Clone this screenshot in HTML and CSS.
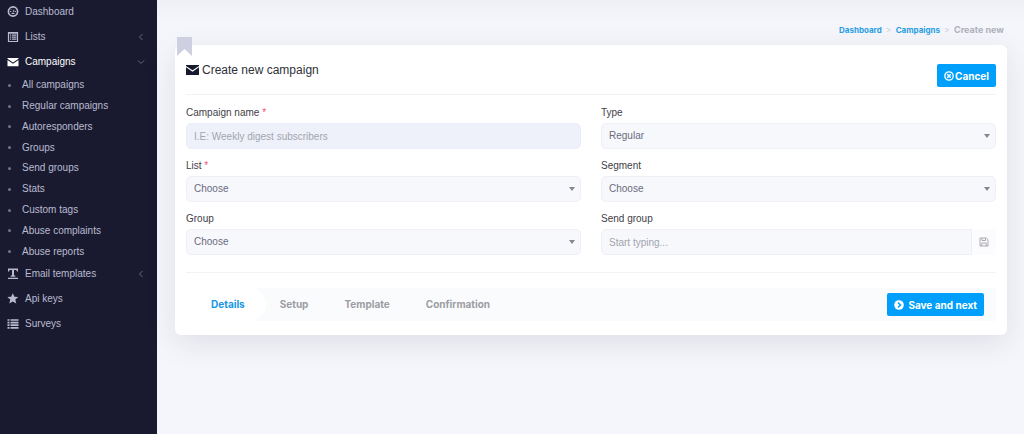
FILE: index.html
```html
<!DOCTYPE html>
<html lang="en">
<head>
<meta charset="utf-8">
<meta name="viewport" content="width=device-width, initial-scale=1">
<title>Create new campaign</title>
<link rel="stylesheet" href="styles.css">
</head>
<body>
<div class="app">
  <nav class="sidebar" aria-label="Main">
    <ul class="menu">
      <li><a class="menu-link" href="#">
        <svg class="icon" viewBox="0 0 12 12"><circle cx="6" cy="5.500" r="4.600" fill="none" stroke="currentColor" stroke-width="1.600"/><path d="M6 6.500 7 3.800M3 5.500h1.200M7.800 5.500H9M4 3.300l.7.700M4.500 7.500h3" stroke="currentColor"/></svg>
        <span>Dashboard</span></a></li>
      <li><a class="menu-link" href="#">
        <svg class="icon" viewBox="0 0 12 12"><path d="M1.500 1.500h9v9h-9z" fill="none" stroke="currentColor" stroke-width="1.200"/><path d="M1.500 2h9M3 4.200h1.200M5 4.200h4.500M3 6.200h1.200M5 6.200h4.500M3 8.200h1.200M5 8.200h4.500" stroke="currentColor" stroke-width="1.300"/></svg>
        <span>Lists</span>
        <svg class="chevron" viewBox="0 0 8 8"><path d="M5.500 1 2.500 4l3 3" fill="none" stroke="currentColor" stroke-width=".9"/></svg></a></li>
      <li><a class="menu-link active" href="#">
        <svg class="icon" viewBox="0 0 12 12"><path d="M.5 2h11v.8L6 6.500.5 2.800z" fill="currentColor"/><path d="M.5 4 6 7.800 11.500 4v6.200H.5z" fill="currentColor"/></svg>
        <span>Campaigns</span>
        <svg class="chevron" viewBox="0 0 8 8"><path d="M1 2.500l3 3 3-3" fill="none" stroke="currentColor" stroke-width=".9"/></svg></a>
        <ul class="submenu">
          <li><a href="#">All campaigns</a></li>
          <li><a href="#">Regular campaigns</a></li>
          <li><a href="#">Autoresponders</a></li>
          <li><a href="#">Groups</a></li>
          <li><a href="#">Send groups</a></li>
          <li><a href="#">Stats</a></li>
          <li><a href="#">Custom tags</a></li>
          <li><a href="#">Abuse complaints</a></li>
          <li><a href="#">Abuse reports</a></li>
        </ul></li>
      <li><a class="menu-link" href="#">
        <svg class="icon" viewBox="0 0 12 12"><path d="M1 .5h10v3H9.900L9.400 2H7v5.600h1.300v1.100H3.700V7.600H5V2H2.600L2.100 3.500H1zM1 9.800h10v1.300H1z" fill="currentColor"/></svg>
        <span>Email templates</span>
        <svg class="chevron" viewBox="0 0 8 8"><path d="M5.500 1 2.500 4l3 3" fill="none" stroke="currentColor" stroke-width=".9"/></svg></a></li>
      <li><a class="menu-link" href="#">
        <svg class="icon" viewBox="0 0 12 12"><path d="M5.800.3 7.400 3.800l3.900.3-3 2.500 1 3.800-3.500-2-3.500 2 1-3.800-3-2.500 3.900-.3z" fill="currentColor"/></svg>
        <span>Api keys</span></a></li>
      <li><a class="menu-link" href="#">
        <svg class="icon" viewBox="0 0 12 12"><path d="M.5 2h2M3.500 2h8M.5 4.600h2M3.500 4.600h8M.5 7.200h2M3.500 7.200h8M.5 9.800h2M3.500 9.800h8" stroke="currentColor" stroke-width="1.700"/></svg>
        <span>Surveys</span></a></li>
    </ul>
  </nav>

  <main class="content">
    <nav class="breadcrumb" aria-label="Breadcrumb">
      <a href="#">Dashboard</a><span class="sep">&gt;</span><a href="#">Campaigns</a><span class="sep">&gt;</span><span class="current">Create new</span>
    </nav>

    <form class="card">
      <svg class="ribbon" viewBox="0 0 15 19"><path d="M0 0h15v19l-7.500-7L0 19z" fill="currentColor"/></svg>
      <header class="card-head">
        <h1 class="title">
          <svg class="title-icon" viewBox="0 0 13 12"><path d="M0 1h13v1L6.500 6.300 0 2z" fill="currentColor"/><path d="M0 3.200 6.500 7.700 13 3.200V11H0z" fill="currentColor"/></svg>
          Create new campaign</h1>
        <button class="btn btn-cancel" type="button">
          <svg class="btn-icon" viewBox="0 0 10 10"><circle cx="5" cy="5" r="4.200" fill="none" stroke="currentColor" stroke-width="1.300"/><path d="M3.300 3.300l3.400 3.400M6.700 3.300 3.300 6.700" stroke="currentColor" stroke-width="1.500"/></svg>Cancel</button>
      </header>

      <div class="fields">
        <div class="field">
          <label for="name">Campaign name <span class="required">*</span></label>
          <input class="control focused" id="name" type="text" placeholder="I.E: Weekly digest subscribers">
        </div>
        <div class="field">
          <label for="type">Type</label>
          <div class="select"><select class="control" id="type"><option>Regular</option></select></div>
        </div>
        <div class="field">
          <label for="list">List <span class="required">*</span></label>
          <div class="select"><select class="control" id="list"><option>Choose</option></select></div>
        </div>
        <div class="field">
          <label for="segment">Segment</label>
          <div class="select"><select class="control" id="segment"><option>Choose</option></select></div>
        </div>
        <div class="field">
          <label for="group">Group</label>
          <div class="select"><select class="control" id="group"><option>Choose</option></select></div>
        </div>
        <div class="field">
          <label for="send-group">Send group</label>
          <div class="input-group">
            <input class="control" id="send-group" type="text" placeholder="Start typing...">
            <button class="addon" type="button" aria-label="Save send group">
              <svg class="save-icon" viewBox="0 0 10 10"><path d="M1 1h6.300L9 2.700V9H1z" fill="none" stroke="currentColor" stroke-linejoin="round"/><path d="M3 1v2.500h3.500V1M2.800 9V6h4.400v3" fill="none" stroke="currentColor"/></svg>
            </button>
          </div>
        </div>
      </div>

      <footer class="wizard">
        <ol class="steps">
          <li><a class="step current-step" href="#">Details</a></li>
          <li><a class="step" href="#">Setup</a></li>
          <li><a class="step" href="#">Template</a></li>
          <li><a class="step" href="#">Confirmation</a></li>
        </ol>
        <button class="btn btn-next" type="submit">
          <svg class="btn-icon" viewBox="0 0 10 10"><circle cx="5" cy="5" r="4.800" fill="currentColor"/><path d="M4 2.500 6.500 5 4 7.500" fill="none" stroke="#009ffb" stroke-width="1.500"/></svg>Save and next</button>
      </footer>
    </form>
  </main>
</div>
</body>
</html>
```
FILE: styles.css
```css
* { box-sizing: border-box; }

body {
  margin: 0;
  background: #f4f6fb;
  color: #3f4047;
  font: 10px/16px "Liberation Sans", Arial, sans-serif;
}

a { text-decoration: none; color: inherit; }
ul, ol { margin: 0; padding: 0; list-style: none; }
button, input, select { font: inherit; }

.app { display: flex; min-height: 100vh; }

.sidebar {
  flex: 0 0 157px;
  background: #191a2f;
  color: #b9bad2;
}

.menu-link {
  display: flex;
  align-items: center;
  gap: 6px;
  height: 25px;
  padding: 0 12px 1px 7px;
}
.menu-link.active { color: #fff; }
.icon { width: 12px; height: 12px; }
.chevron { width: 8px; height: 8px; margin-left: auto; color: #6d6e8b; }

.submenu {
  display: grid;
  grid-auto-rows: 1fr;
  height: 187px;
}
.submenu a {
  display: flex;
  align-items: center;
  gap: 11px;
  height: 100%;
  padding-left: 8px;
}
.submenu a::before {
  content: "";
  width: 3px;
  height: 3px;
  border-radius: 50%;
  background: #73748f;
}

.content {
  flex: 1;
  min-width: 0;
  padding: 22px 17px 22px 18px;
  background: linear-gradient(#eef0f5, #f4f6fb 20px);
}

.breadcrumb {
  display: flex;
  justify-content: flex-end;
  padding-right: 3px;
  margin-bottom: 7px;
  color: #2a9fe4;
  font: 700 8px/16px Inter, sans-serif;
}
.sep { width: 14px; text-align: center; color: #c9cad3; font-weight: 400; }
.current { color: #b1b2bb; font-size: 9px; }

.card {
  position: relative;
  padding: 15px 11px 14px;
  border-radius: 6px;
  background: #fff;
  box-shadow: 0 8px 30px rgba(30, 32, 50, 0.1);
}

.ribbon {
  position: absolute;
  top: -8px;
  left: 2px;
  width: 15px;
  height: 19px;
  color: #cfcfe2;
}

.card-head {
  display: flex;
  justify-content: space-between;
  align-items: flex-start;
  height: 35px;
  border-bottom: 1px solid #f2f3f7;
}
.title {
  display: flex;
  align-items: center;
  gap: 3px;
  margin: 0;
  color: #2e3038;
  font-size: 12px;
  font-weight: 400;
  line-height: 20px;
}
.title-icon { width: 13px; height: 12px; color: #171a2c; }

.btn {
  display: flex;
  align-items: center;
  justify-content: center;
  height: 23px;
  padding: 0 7px;
  border: 0;
  border-radius: 2px;
  background: #009ffb;
  color: #fff;
  font: 700 10px/16px Inter, sans-serif;
}
.btn-icon { width: 10px; height: 10px; }
.btn-cancel { gap: 1px; margin-top: 4px; }
.btn-next { gap: 4px; }

.fields {
  display: grid;
  grid-template-columns: 1fr 1fr;
  gap: 9px 20px;
  padding: 10px 0 17px;
  border-bottom: 1px solid #f2f3f7;
}
.field label { display: block; margin-bottom: 2px; }
.required { color: #f4516c; }

.control {
  display: block;
  width: 100%;
  height: 26px;
  padding: 0 7px;
  border: 1px solid #eff0f5;
  border-radius: 5px;
  background: #f7f8fb;
  color: #6a6b80;
  appearance: none;
  outline: 0;
}
.control::placeholder { color: #a2a5b0; opacity: 1; }
.focused { border-color: #e9edf6; background: #eef1f9; }

.select { position: relative; }
.select::after {
  content: "";
  position: absolute;
  top: 11px;
  right: 6px;
  border: 3px solid transparent;
  border-top: 4px solid #84858f;
  border-bottom: 0;
}

.input-group { display: flex; }
.input-group .control { flex: 1; width: auto; border-radius: 5px 0 0 5px; }
.addon {
  display: grid;
  place-items: center;
  width: 24px;
  padding: 0;
  border: 0;
  background: #fcfcfe;
  color: #a9aab0;
}
.save-icon { width: 10px; height: 10px; }

.wizard {
  display: flex;
  align-items: center;
  justify-content: space-between;
  margin-top: 15px;
  padding-right: 12px;
  background: #fafbfc;
}
.steps { display: flex; }
.step {
  display: block;
  padding: 0 18px;
  color: #9c9da3;
  font: 700 10px/33px Inter, sans-serif;
}
.current-step {
  margin-right: -4px;
  padding: 0 21px 0 25px;
  border-radius: 0 17px 17px 0;
  background: #fff;
  color: #1597e5;
}
```
